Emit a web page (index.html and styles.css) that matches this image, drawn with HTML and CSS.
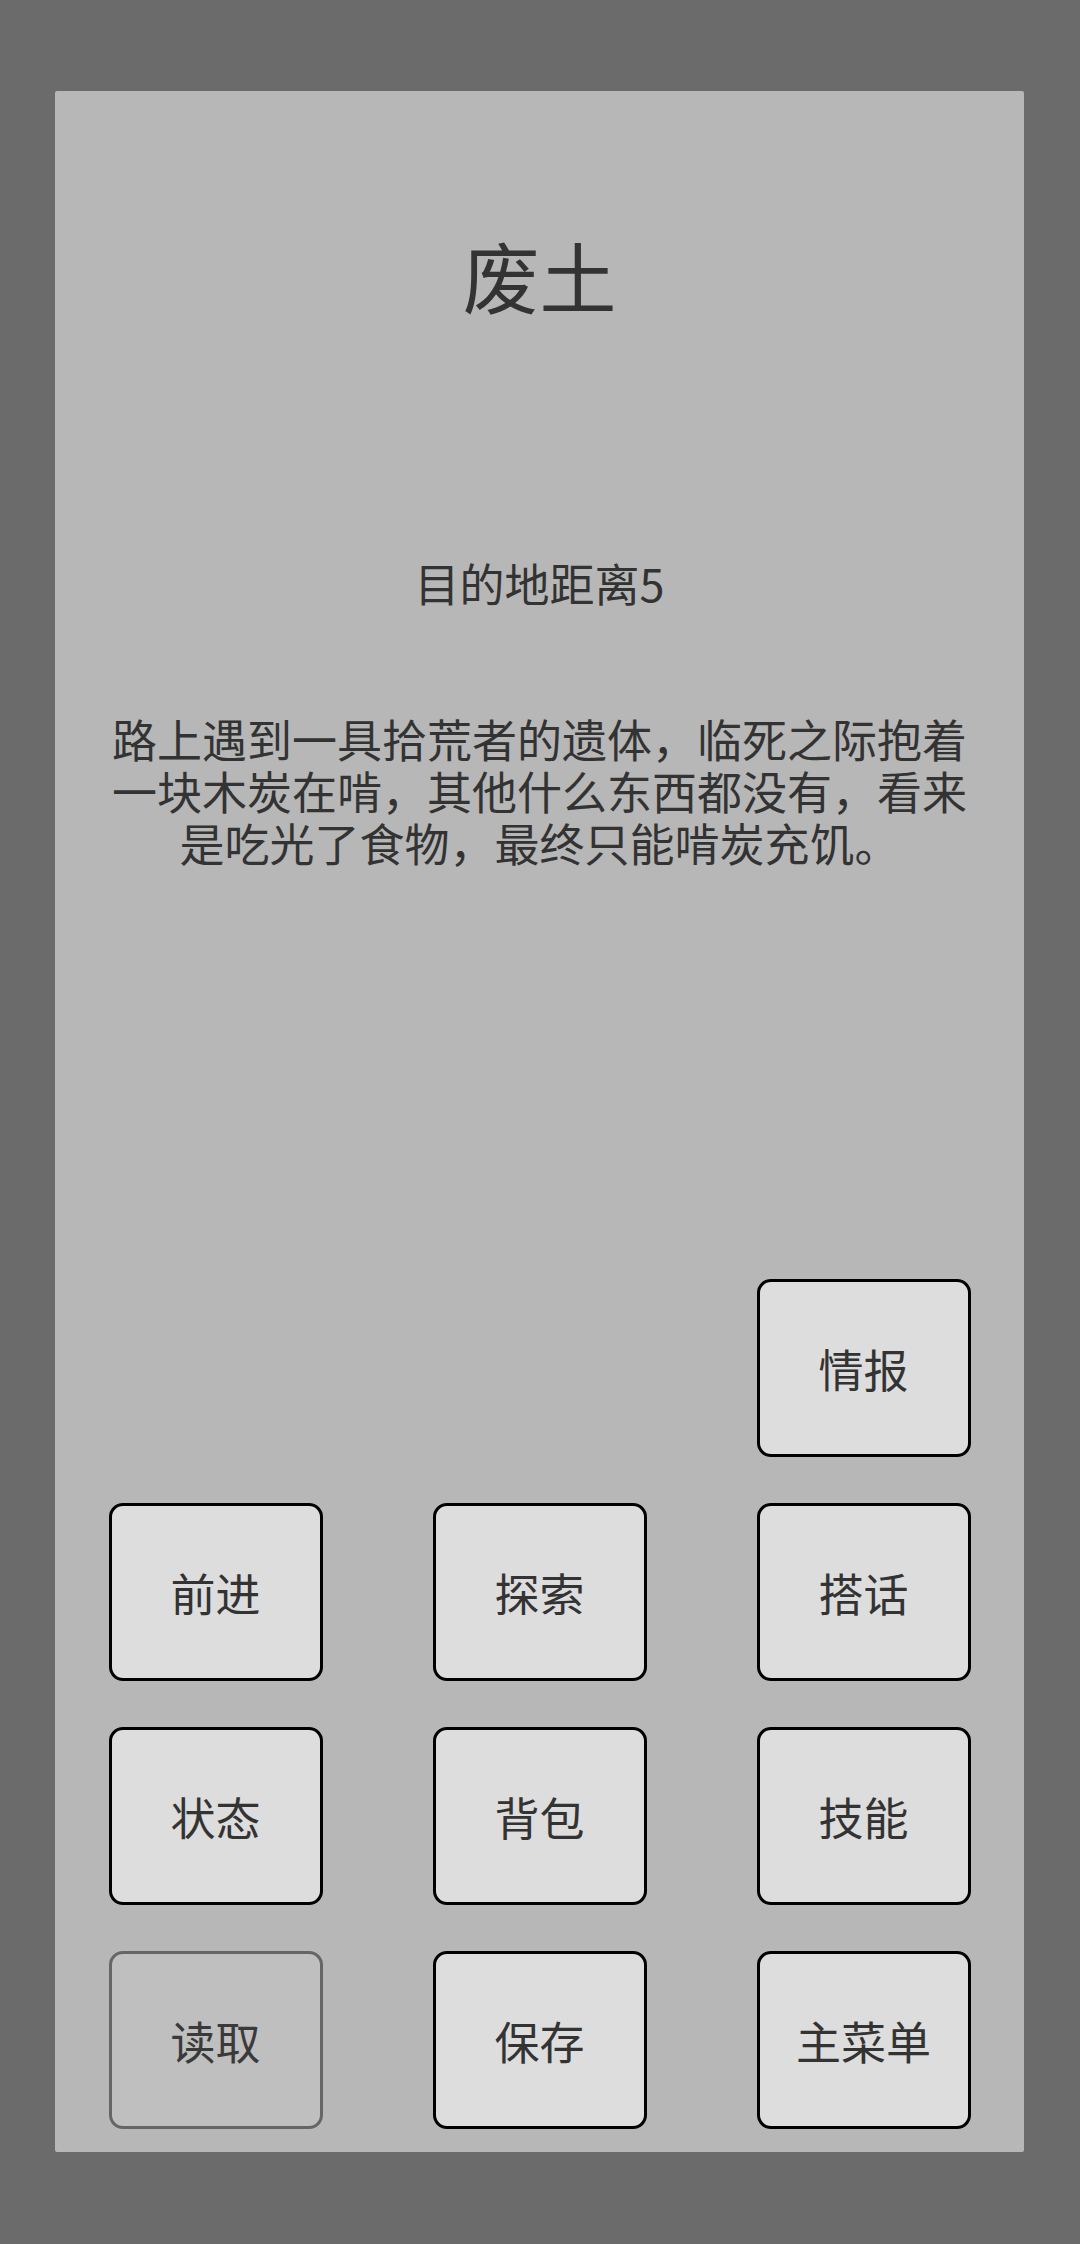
FILE: index.html
```html
<!DOCTYPE html>
<html lang="zh-CN">
<head>
    <meta charset="UTF-8">
    <meta name="viewport" content="width=device-width, initial-scale=1.0">
    <title>废土</title>
    <link rel="stylesheet" href="styles.css">
</head>
<body>
    <div class="panel">
        <h1 class="title">废土</h1>
        <div class="distance">目的地距离5</div>
        <p class="story">路上遇到一具拾荒者的遗体，临死之际抱着一块木炭在啃，其他什么东西都没有，看来是吃光了食物，最终只能啃炭充饥。</p>

        <div class="actions">
            <button class="action col-3">情报</button>
            <button class="action">前进</button>
            <button class="action">探索</button>
            <button class="action">搭话</button>
            <button class="action">状态</button>
            <button class="action">背包</button>
            <button class="action">技能</button>
            <button class="action disabled" disabled>读取</button>
            <button class="action">保存</button>
            <button class="action">主菜单</button>
        </div>
    </div>
</body>
</html>
```

FILE: styles.css
```css
html, body {
    margin: 0;
    height: 100%;
}
body {
    background-color: #6b6b6b;
    font-family: "Noto Sans CJK SC", "Noto Sans", sans-serif;
    color: #333;
    padding: 91px 56px 92px 55px;
    box-sizing: border-box;
}
.panel {
    height: 100%;
    background-color: #b7b7b7;
    border-radius: 2px;
    display: flex;
    flex-direction: column;
    align-items: center;
    text-align: center;
    padding-bottom: 23px;
    box-sizing: border-box;
}
.title {
    font-size: 77px;
    font-weight: normal;
    line-height: 77px;
    margin: 145px 0 0;
}
.distance {
    font-size: 45px;
    line-height: 52px;
    margin-top: 244px;
}
.story {
    font-size: 45px;
    line-height: 52px;
    width: 870px;
    margin: 104px 0 0;
}
.actions {
    margin-top: auto;
    display: grid;
    grid-template-columns: repeat(3, 214px);
    grid-auto-rows: 178px;
    column-gap: 110px;
    row-gap: 46px;
}
.action {
    font-family: inherit;
    font-size: 45px;
    color: #333;
    background-color: #dddddd;
    border: 3px solid #000;
    border-radius: 14px;
    padding: 0;
    box-sizing: border-box;
}
.col-3 {
    grid-column: 3;
}
.action.disabled {
    background-color: #bfbfbf;
    border: 3px solid #666;
    color: #3a3a3a;
}
```
